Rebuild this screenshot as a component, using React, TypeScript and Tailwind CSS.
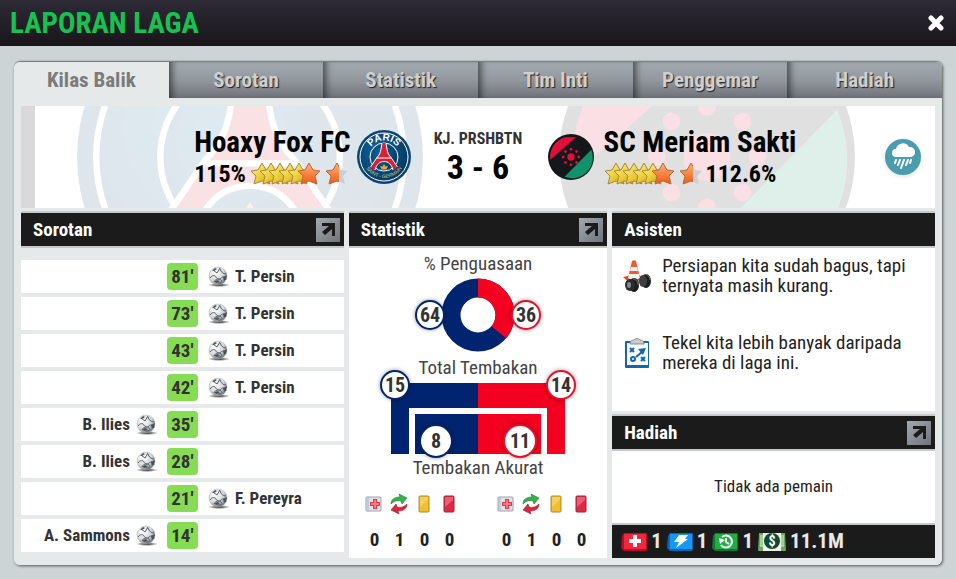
import type { ReactNode } from "react";

type Side = "home" | "away";

const tabs = ["Kilas Balik", "Sorotan", "Statistik", "Tim Inti", "Penggemar", "Hadiah"];

const goals: { minute: number; player: string; side: Side }[] = [
  { minute: 81, player: "T. Persin", side: "away" },
  { minute: 73, player: "T. Persin", side: "away" },
  { minute: 43, player: "T. Persin", side: "away" },
  { minute: 42, player: "T. Persin", side: "away" },
  { minute: 35, player: "B. Ilies", side: "home" },
  { minute: 28, player: "B. Ilies", side: "home" },
  { minute: 21, player: "F. Pereyra", side: "away" },
  { minute: 14, player: "A. Sammons", side: "home" },
];

const STAR = "M12 1l4 7 7 1-5 5 2 8-8-3-8 3 2-8-5-5 7-1z";

function Stars({ id }: { id: string }) {
  return (
    <svg width="98" height="24" viewBox="0 0 98 24" aria-hidden="true">
      <defs>
        <linearGradient id={id + "-gold"} x1="0" y1="0" x2="1" y2="1">
          <stop offset="0" stopColor="#fff3a0" />
          <stop offset=".5" stopColor="#efcf3f" />
          <stop offset="1" stopColor="#c8940f" />
        </linearGradient>
        <linearGradient id={id + "-orange"} x1="0" y1="0" x2="0" y2="1">
          <stop offset="0" stopColor="#ffb27a" />
          <stop offset="1" stopColor="#ee5a13" />
        </linearGradient>
        <clipPath id={id + "-half"}>
          <rect width="14" height="24" />
        </clipPath>
      </defs>
      {[0, 9, 18, 28, 37].map((x) => (
        <path key={x} d={STAR} transform={`translate(${x} 0)`} fill={`url(#${id}-gold)`} stroke="#a58c34" strokeWidth="1" strokeLinejoin="round" />
      ))}
      <path d={STAR} transform="translate(47 0)" fill={`url(#${id}-orange)`} stroke="#b9693a" strokeWidth="1" strokeLinejoin="round" />
      <g transform="translate(75 0)">
        <path d={STAR} fill="#c9ced8" />
        <path d={STAR} fill={`url(#${id}-orange)`} stroke="#b9693a" strokeWidth="1" strokeLinejoin="round" clipPath={`url(#${id}-half)`} />
      </g>
    </svg>
  );
}

function ParisCrest({ className, lettering = false }: { className: string; lettering?: boolean }) {
  return (
    <svg className={className} viewBox="0 0 108 108" aria-hidden="true">
      <defs>
        <radialGradient id="paris-blue" cx=".4" cy=".4" r=".65">
          <stop offset="0" stopColor="#0d6ba6" />
          <stop offset="1" stopColor="#06365f" />
        </radialGradient>
        <path id="paris-top" d="M21 54a33 33 0 0 1 66 0" />
        <path id="paris-bottom" d="M12 54a42 42 0 0 0 84 0" />
      </defs>
      <circle cx="54" cy="54" r="54" fill="#0a4673" />
      <circle cx="54" cy="54" r="48" fill="url(#paris-blue)" stroke="#fff" strokeWidth="2" />
      <circle cx="54" cy="54" r="28" fill="url(#paris-blue)" stroke="#fff" strokeWidth="2" />
      <path d="M51 26h6l3 12c1 7 4 12 8 17l13 19-8 7c-3-11-9-18-19-18s-16 7-19 18l-8-7 13-19c4-5 7-10 8-17z" fill="#dc1f35" />
      <path
        d="M50 27l-2 11c-1 8-4 13-8 17L27 74M58 27l2 11c1 8 4 13 8 17l13 19M39 56h30M36 80c3-11 9-17 18-17s15 6 18 17"
        fill="none"
        stroke="#fff"
        strokeWidth="2"
      />
      <path d="M54 68l3 5 5-1-3 7H49l-3-7 5 1z" fill="#e0aa3c" />
      {lettering && (
        <g fill="#fff" fontFamily="'Liberation Sans', sans-serif" textAnchor="middle">
          <text fontSize="20" fontWeight="700">
            <textPath href="#paris-top" startOffset="50%">PARIS</textPath>
          </text>
          <text fontSize="10" fill="#d9c27a">
            <textPath href="#paris-bottom" startOffset="50%">SAINT - GERMAIN</textPath>
          </text>
        </g>
      )}
    </svg>
  );
}

function SaktiCrest({ className }: { className: string }) {
  const dots = [0, 45, 90, 135, 180, 225, 270, 315];
  return (
    <svg className={className} viewBox="-50 -50 100 100" aria-hidden="true">
      <circle r="50" fill="#16171b" />
      <path d="M-45 6A45 45 0 0 1-13-43h24z" fill="#e0103a" />
      <path d="M44-16A45 45 0 0 1-14 43z" fill="#10926c" />
      <g fill="#e0103a">
        <circle r="8" />
        {dots.map((angle) => (
          <circle key={angle} cy="-17" r="3" transform={`rotate(${angle})`} />
        ))}
      </g>
    </svg>
  );
}

function Ball() {
  return (
    <svg width="23" height="22" viewBox="0 0 23 22" className="shrink-0" aria-hidden="true">
      <defs>
        <radialGradient id="ball" cx=".35" cy=".3" r=".75">
          <stop offset="0" stopColor="#fff" />
          <stop offset=".6" stopColor="#d5d9dc" />
          <stop offset="1" stopColor="#6d7379" />
        </radialGradient>
        <radialGradient id="ball-shadow">
          <stop offset="0" stopColor="#000" stopOpacity=".9" />
          <stop offset="1" stopColor="#000" stopOpacity="0" />
        </radialGradient>
      </defs>
      <ellipse cx="11" cy="19" rx="11" ry="2" fill="url(#ball-shadow)" />
      <circle cx="10" cy="10" r="9" fill="url(#ball)" stroke="#a3a8ac" strokeWidth=".5" />
      <path
        d="M5 4l4 3 3-5M2 12c2-3 5-3 6-1s3 3 5 1 4-1 5 2M6 16c1-3 5-4 7-2s0 3-3 3M12 3c1 3 3 5 6 5"
        fill="none"
        stroke="#565c62"
        strokeWidth="1"
      />
      <path d="M15 11l4-2-1 4-2 2zM4 5l3-3 2 1-3 2zM6 16l3-2 3 1-3 2z" fill="#4a5056" />
    </svg>
  );
}

function SectionHeader({ title, link = false }: { title: string; link?: boolean }) {
  return (
    <div className="flex items-center justify-between border-y-2 border-[#c6c9ca] bg-[#1b1b1b] pl-3 pr-1">
      <h2 className="text-[19px] leading-[33px] font-bold text-white">{title}</h2>
      {link && (
        <button
          aria-label={`Buka ${title}`}
          className="flex h-6 w-6 items-center justify-center bg-linear-to-br from-[#a4a9ae] to-[#70757c]"
        >
          <svg width="16" height="16" viewBox="0 0 16 16" aria-hidden="true">
            <path d="M2 1h13v13h-3V7l-7 6-3-3 7-6H2z" fill="#1b1b1b" />
          </svg>
        </button>
      )}
    </div>
  );
}

function Bubble({ children, className }: { children: ReactNode; className: string }) {
  return (
    <span
      className={`flex items-center justify-center rounded-full bg-white text-xl leading-none font-bold text-[#333] shadow-[0_0_4px_rgba(0,0,0,0.4)] ${className}`}
    >
      {children}
    </span>
  );
}

function Possession() {
  return (
    <div className="flex items-center justify-center">
      <Bubble className="z-10 -mr-1 size-[30px] border-2 border-[#00246f]">64</Bubble>
      <svg width="74" height="74" viewBox="-37 -37 74 74" aria-hidden="true">
        <circle r="27" fill="none" stroke="#00246f" strokeWidth="19" />
        <circle r="27" fill="none" stroke="#f40020" strokeWidth="19" pathLength="100" strokeDasharray="36 64" transform="rotate(-90)" />
      </svg>
      <Bubble className="z-10 -ml-1 size-[30px] border-2 border-[#e4122c]">36</Bubble>
    </div>
  );
}

function Shots() {
  return (
    <div className="relative mx-auto flex h-[71px] w-[174px]">
      <div className="flex-1 bg-[#00246f]" />
      <div className="flex-1 bg-[#f40020]" />
      <div className="absolute inset-x-[18px] top-[25px] bottom-0 border-6 border-b-0 border-white" />
      <Bubble className="absolute -top-[13px] -left-[11px] size-[30px] border-2 border-[#00246f]">15</Bubble>
      <Bubble className="absolute -top-[13px] -right-[11px] size-[30px] border-2 border-[#e4122c]">14</Bubble>
      <Bubble className="absolute -bottom-1 left-7 size-[34px] border-2 border-[#00246f]">8</Bubble>
      <Bubble className="absolute right-7 -bottom-1 size-[34px] border-2 border-[#e4122c]">11</Bubble>
    </div>
  );
}

function InjuryIcon() {
  return (
    <svg width="18" height="18" viewBox="0 0 18 18" aria-hidden="true">
      <rect x="1" y="2" width="15" height="14" rx="1" fill="#dfe3e8" stroke="#9aa2ab" />
      <path d="M3 2v14" stroke="#aab2ba" />
      <path d="M8 4h4v3h3v4h-3v3H8v-3H5V7h3z" fill="#e8394a" />
      <path d="M9 5h2v3h3v2h-3v3H9v-3H6V8h3z" fill="#f77a85" />
    </svg>
  );
}

function SubIcon() {
  return (
    <svg width="18" height="22" viewBox="0 0 18 22" aria-hidden="true">
      <path d="M1 11C1 6 5 4 10 4L9 1l8 4-5 6-1-3c-4-1-7 0-10 3z" fill="#35b34a" stroke="#1f7a30" strokeWidth=".6" />
      <path d="M17 11c0 5-4 7-9 7l1 3-8-4 5-6 1 3c4 1 7 0 10-3z" fill="#d9273f" stroke="#93182a" strokeWidth=".6" />
    </svg>
  );
}

function CardIcon({ fill, edge }: { fill: string; edge: string }) {
  return (
    <svg width="14" height="18" viewBox="0 0 14 18" aria-hidden="true">
      <rect x="2" y="1" width="10" height="16" rx="1" fill={fill} stroke={edge} />
      <path d="M3 2h8v3L3 12z" fill="#fff" opacity=".25" />
    </svg>
  );
}

function Counts({ label }: { label: string }) {
  const cells = [
    { name: "Cedera", icon: <InjuryIcon />, value: 0 },
    { name: "Pergantian", icon: <SubIcon />, value: 1 },
    { name: "Kartu kuning", icon: <CardIcon fill="#f0c02c" edge="#a68a2c" />, value: 0 },
    { name: "Kartu merah", icon: <CardIcon fill="#e02a45" edge="#98263a" />, value: 0 },
  ];
  return (
    <ul aria-label={label} className="grid w-[100px] grid-cols-4 text-center">
      {cells.map((cell) => (
        <li key={cell.name} title={cell.name}>
          <span className="flex h-5 items-center justify-center">{cell.icon}</span>
          <span className="mt-4 block text-[19px] leading-5 font-bold text-[#222]">{cell.value}</span>
        </li>
      ))}
    </ul>
  );
}

function ConeIcon() {
  return (
    <svg width="30" height="34" viewBox="0 0 30 34" aria-hidden="true">
      <path d="M1 18l14-3 9 5-14 6z" fill="#e04a26" />
      <path d="M10 2c1-1 3-1 4 0l4 17c-3 2-9 2-12 0z" fill="#f05a30" />
      <path d="M9 8h6l1 4H8zM7 15h10l1 4c-4 2-9 2-12 0z" fill="#f2f2f2" />
      <path d="M13 24l9-3" stroke="#aaa" strokeWidth="3" />
      <ellipse cx="24" cy="22" rx="5" ry="7" fill="#1d1d1f" />
      <ellipse cx="21" cy="22" rx="4" ry="6" fill="#3d3f42" />
      <ellipse cx="12" cy="26" rx="5" ry="7" fill="#1d1d1f" />
      <ellipse cx="8" cy="26" rx="5" ry="6" fill="#2a2b2d" />
      <ellipse cx="7" cy="26" rx="2" ry="3" fill="#85898d" />
      <path d="M11 20c3 0 5 3 5 6M23 15c3 1 5 3 5 6" fill="none" stroke="#888" strokeWidth=".8" />
    </svg>
  );
}

function TacticsIcon() {
  return (
    <svg width="26" height="32" viewBox="0 0 26 32" aria-hidden="true">
      <rect x="1" y="4" width="24" height="27" rx="1" fill="#1767a5" />
      <rect x="3" y="6" width="21" height="22" fill="#f7fbfd" />
      <path d="M6 6c0-2 2-3 4-3 1-2 5-2 6 0 2 0 4 1 4 3v1H6z" fill="#c9cbcc" stroke="#77797b" strokeWidth=".8" />
      <g stroke="#1767a5" strokeWidth="2" fill="none">
        <path d="M6 11l4 4M10 11l-4 4M17 20l4 4M21 20l-4 4M12 20l6-5" />
        <circle cx="9" cy="22" r="2" />
      </g>
      <path d="M14 12l8-1-3 7z" fill="#1767a5" />
    </svg>
  );
}

function WeatherIcon() {
  return (
    <svg width="40" height="40" viewBox="0 0 40 40" className="drop-shadow-sm" role="img" aria-label="Hujan">
      <circle cx="20" cy="20" r="18" fill="#4b9cad" />
      <path d="M13 20a4 4 0 0 1 0-8 7 7 0 0 1 13-2 5 5 0 0 1 2 10z" fill="#fff" />
      <path d="M13 23l-1 3M17 23l-2 5M21 23l-3 8M25 23l-2 5M28 23l-1 3" stroke="#fff" strokeWidth="2" strokeLinecap="round" />
    </svg>
  );
}

function RewardCard({ fill, edge, children }: { fill: string; edge: string; children: ReactNode }) {
  return (
    <svg width="26" height="18" viewBox="0 0 26 18" aria-hidden="true">
      <path d="M1 3l2-3h22l1 1v16l-1 1H3l-3-3z" fill={edge} />
      <path d="M3 1h22v15H3z" fill={fill} />
      {children}
    </svg>
  );
}

const rewards = [
  {
    value: "1",
    icon: (
      <RewardCard fill="#f2263f" edge="#b80d24">
        <path d="M12 2h4v4h4v4h-4v4h-4v-4H8V6h4z" fill="#fff" />
      </RewardCard>
    ),
  },
  {
    value: "1",
    icon: (
      <RewardCard fill="#1797f2" edge="#0d63b8">
        <path d="M12 2h9l-3 4h3L9 15l3-6H7z" fill="#fff" />
      </RewardCard>
    ),
  },
  {
    value: "1",
    icon: (
      <RewardCard fill="#1fae45" edge="#0f7a2b">
        <path d="M10 4a6 6 0 1 1-1 8M14 5v4l3 2" fill="none" stroke="#fff" strokeWidth="2" />
        <path d="M7 5l6 2-5 4z" fill="#fff" />
      </RewardCard>
    ),
  },
  {
    value: "11.1M",
    icon: (
      <svg width="28" height="18" viewBox="0 0 28 18" aria-hidden="true">
        <path d="M1 0h26l1 18H0z" fill="#67a85c" />
        <path d="M2 2h24v12H2z" fill="#a5cf95" />
        <path d="M5 0h18v18H5z" fill="#edf3ea" />
        <circle cx="14" cy="8" r="8" fill="#0d4a35" />
        <text x="14" y="13" textAnchor="middle" fontSize="14" fontWeight="700" fill="#fff">$</text>
      </svg>
    ),
  },
];

function Banner() {
  return (
    <div className="relative flex h-[102px] items-center overflow-hidden border-l-14 border-[#d9d9d9] bg-white">
      <div className="absolute inset-y-0 right-0 -left-3.5 flex items-stretch opacity-[.13]">
        <div className="flex flex-1 items-center justify-center">
          <ParisCrest className="h-[346px] w-[346px] shrink-0" />
        </div>
        <div className="flex flex-1 items-center justify-center">
          <SaktiCrest className="h-[296px] w-[296px] shrink-0" />
        </div>
      </div>
      <div className="relative -ml-3.5 grid flex-1 grid-cols-[1fr_135px_1fr] items-center">
        <div className="flex items-center justify-end gap-1.5">
          <div>
            <h2 className="text-[29px] leading-[34px] font-bold">Hoaxy Fox FC</h2>
            <div className="flex items-center gap-1 text-2xl leading-[30px] font-bold">
              115%
              <Stars id="home" />
            </div>
          </div>
          <ParisCrest className="w-[54px] shrink-0" lettering />
        </div>
        <div className="text-center font-bold">
          <p className="text-base leading-5 text-[#333]">KJ. PRSHBTN</p>
          <p className="text-[34px] leading-9">3 - 6</p>
        </div>
        <div className="flex items-center gap-2.5 pl-0.5">
          <SaktiCrest className="w-[46px] shrink-0" />
          <div>
            <h2 className="text-[29px] leading-[34px] font-bold">SC Meriam Sakti</h2>
            <div className="flex items-center gap-1 text-2xl leading-[30px] font-bold">
              <Stars id="away" />
              112.6%
            </div>
          </div>
          <div className="mr-3 ml-auto">
            <WeatherIcon />
          </div>
        </div>
      </div>
    </div>
  );
}

export default function App() {
  return (
    <div className="min-h-screen bg-[#cdd4d6] pb-3.5 font-['Roboto_Condensed','Liberation_Sans_Narrow',sans-serif] text-black">
      <header className="flex h-[46px] items-center justify-between bg-linear-to-b from-[#2f2b37] to-[#18151a] pr-3 pl-2.5">
        <h1 className="text-[29px] leading-none font-bold text-[#17c250]">LAPORAN LAGA</h1>
        <button aria-label="Tutup" className="text-white">
          <svg width="16" height="16" viewBox="0 0 16 16" aria-hidden="true">
            <path d="M3 3l10 10M13 3L3 13" stroke="currentColor" strokeWidth="5" strokeLinecap="round" />
          </svg>
        </button>
      </header>

      <main className="px-3.5 pt-[15px]">
        <div className="rounded-md shadow-[1px_1px_3px_rgba(0,0,0,0.6)]">
          <nav className="grid h-[37px] grid-cols-6 overflow-hidden rounded-t-md border-t border-[#777d81] bg-[#e5e9ea]">
            {tabs.map((tab, index) => (
              <button
                key={tab}
                className={
                  index === 0
                    ? "text-[21px] leading-none font-bold text-[#7b7b7b]"
                    : "bg-linear-to-b from-[#a3abb0] via-[#92989e] to-[#70747a] text-[21px] leading-none font-bold text-[#cfcfcf] shadow-[inset_7px_0_7px_-4px_rgba(0,0,0,0.55)] text-shadow-[1px_1px_1px_#222]"
                }
              >
                {tab}
              </button>
            ))}
          </nav>

          <div className="rounded-b-md bg-[#e5e9ea] px-[7px] pt-2 pb-[7px]">
            <Banner />

            <div className="mt-[3px] grid grid-cols-[5fr_4fr_5fr] gap-[5px]">
              <section>
                <SectionHeader title="Sorotan" link />
                <ul className="mt-3 flex flex-col gap-1 pb-1.5">
                  {goals.map((goal) => (
                    <li key={goal.minute} className="grid h-[33px] grid-cols-[1fr_31px_1fr] items-center bg-white text-[17px] font-bold text-[#333]">
                      <span className="flex items-center justify-end gap-1.5 pr-2">
                        {goal.side === "home" && (
                          <>
                            {goal.player}
                            <Ball />
                          </>
                        )}
                      </span>
                      <span className="rounded-sm bg-[#87dc56] text-center text-[19px] leading-[27px]">{goal.minute}'</span>
                      <span className="flex items-center gap-1 pl-2.5">
                        {goal.side === "away" && (
                          <>
                            <Ball />
                            {goal.player}
                          </>
                        )}
                      </span>
                    </li>
                  ))}
                </ul>
              </section>

              <section className="flex flex-col">
                <SectionHeader title="Statistik" link />
                <div className="flex-1 bg-white pt-1.5 text-center text-[19px] leading-5 text-[#444]">
                  <h3>% Penguasaan</h3>
                  <div className="mt-1">
                    <Possession />
                  </div>
                  <h3 className="mt-1.5">Total Tembakan</h3>
                  <div className="mt-[5px]">
                    <Shots />
                  </div>
                  <h3 className="mt-1">Tembakan Akurat</h3>
                  <div className="mt-4 flex justify-center gap-8">
                    <Counts label="Hoaxy Fox FC" />
                    <Counts label="SC Meriam Sakti" />
                  </div>
                </div>
              </section>

              <section className="flex flex-col">
                <SectionHeader title="Asisten" />
                <ul className="flex h-[163px] flex-col gap-[37px] bg-white px-2.5 pt-2 text-[19px] leading-5 text-[#222]">
                  <li className="flex items-center gap-2.5">
                    <span className="flex w-[30px] shrink-0 justify-center">
                      <ConeIcon />
                    </span>
                    <p className="max-w-[260px]">Persiapan kita sudah bagus, tapi ternyata masih kurang.</p>
                  </li>
                  <li className="flex items-center gap-2.5">
                    <span className="flex w-[30px] shrink-0 justify-center">
                      <TacticsIcon />
                    </span>
                    <p className="max-w-[260px]">Tekel kita lebih banyak daripada mereka di laga ini.</p>
                  </li>
                </ul>
                <div className="mt-[3px]">
                  <SectionHeader title="Hadiah" link />
                </div>
                <p className="flex flex-1 items-center justify-center bg-white text-[17px] text-[#222]">Tidak ada pemain</p>
                <ul className="flex h-[35px] items-center gap-[5px] border-t-2 border-[#c6c9ca] bg-[#1b1b1b] pl-[9px] text-[21px] leading-none font-bold text-[#e8e8e8]">
                  {rewards.map((reward, index) => (
                    <li key={index} className="flex items-center gap-1">
                      {reward.icon}
                      {reward.value}
                    </li>
                  ))}
                </ul>
              </section>
            </div>
          </div>
        </div>
      </main>
    </div>
  );
}
